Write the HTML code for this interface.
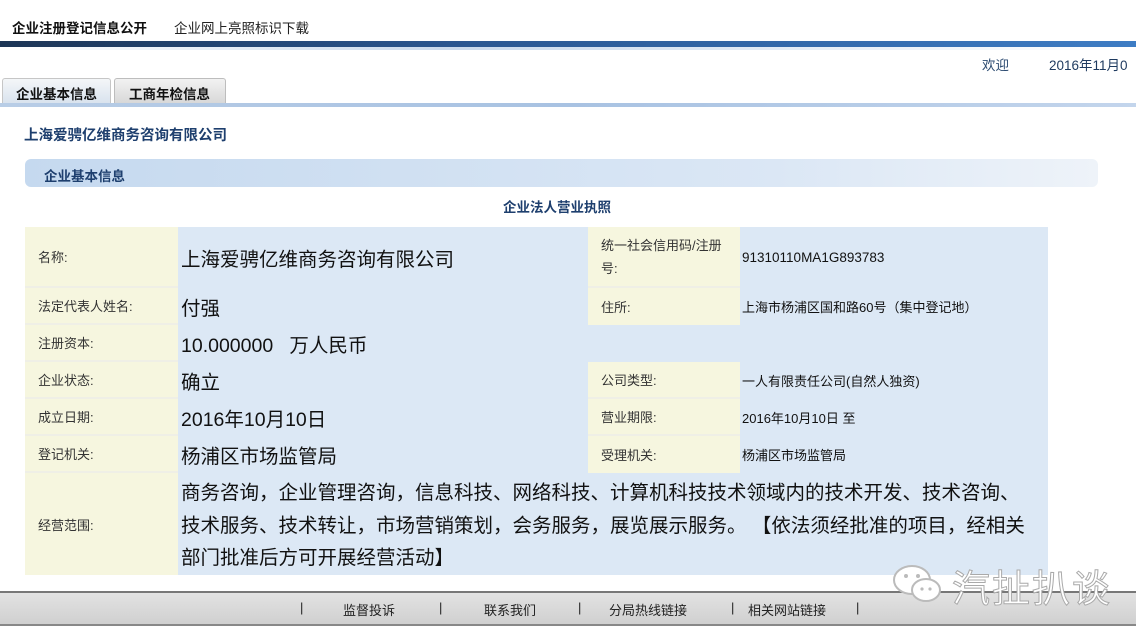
<!DOCTYPE html>
<html><head><meta charset="utf-8"><style>
*{margin:0;padding:0;box-sizing:border-box}
body{width:1136px;height:640px;position:relative;background:#fff;font-family:"Liberation Sans","Noto Sans CJK SC",sans-serif;overflow:hidden;color:#222}
.a{position:absolute;white-space:nowrap}
.lab{position:absolute;background:#f6f6df;font-size:13px;color:#333;padding-left:13px;display:flex;align-items:center;border-bottom:2px solid #efefe6}
.val{position:absolute;font-size:19.5px;color:#111;display:flex;align-items:center}
.rv{position:absolute;font-size:13px;color:#111;display:flex;align-items:center}
.f{position:absolute;top:600px;font-size:13px;color:#222}
</style></head><body>
<div class="a" style="left:12px;top:17px;font-size:13.5px;font-weight:bold;color:#111">企业注册登记信息公开</div>
<div class="a" style="left:174px;top:17px;font-size:13.5px;color:#222">企业网上亮照标识下载</div>
<div class="a" style="left:0;top:41px;width:1136px;height:6px;background:linear-gradient(90deg,#1c3556,#2a5690 40%,#3d7cc4)"></div>
<div class="a" style="left:0;top:47px;width:1136px;height:3px;background:linear-gradient(90deg,#fff,#c9d9ec 40%,#fff)"></div>
<div class="a" style="left:982px;top:54px;font-size:13.5px;color:#2b4a70">欢迎</div>
<div class="a" style="left:1049px;top:54px;font-size:13.5px;color:#1e3a5f">2016年11月0</div>
<div class="a" style="left:2px;top:78px;width:109px;height:25px;border:1px solid #c6c6c6;border-bottom:none;border-radius:3px 3px 0 0;background:linear-gradient(#f4f6f8,#d9e3ee);font-size:13.5px;font-weight:bold;padding:4px 0 0 13px;color:#111">企业基本信息</div>
<div class="a" style="left:114px;top:78px;width:112px;height:25px;border:1px solid #bdbdbd;border-bottom:none;border-radius:3px 3px 0 0;background:linear-gradient(#f2f2f2,#d8d8d8);font-size:13.5px;font-weight:bold;padding:4px 0 0 14px;color:#111">工商年检信息</div>
<div class="a" style="left:0;top:103px;width:1136px;height:4px;background:linear-gradient(90deg,#b8cde6,#a8c2e2 50%,#c3d5ec)"></div>
<div class="a" style="left:24px;top:124px;font-size:14.5px;font-weight:bold;color:#1e3f6e">上海爱骋亿维商务咨询有限公司</div>
<div class="a" style="left:25px;top:159px;width:1073px;height:28px;border-radius:6px;background:linear-gradient(90deg,#c5d9ef,#dbe7f5 70%,#eef3f9);font-size:13.5px;font-weight:bold;color:#1e3f6e;padding:6px 0 0 19px">企业基本信息</div>
<div class="a" style="left:503px;top:196px;font-size:13.5px;font-weight:bold;color:#1e3f6e">企业法人营业执照</div>

<div class="a" style="left:178px;top:227px;width:870px;height:348px;background:#dce8f5"></div>
<div class="lab" style="left:25px;top:227px;width:153px;height:61px">名称:</div>
<div class="lab" style="left:25px;top:288px;width:153px;height:37px">法定代表人姓名:</div>
<div class="lab" style="left:25px;top:325px;width:153px;height:37px">注册资本:</div>
<div class="lab" style="left:25px;top:362px;width:153px;height:37px">企业状态:</div>
<div class="lab" style="left:25px;top:399px;width:153px;height:37px">成立日期:</div>
<div class="lab" style="left:25px;top:436px;width:153px;height:37px">登记机关:</div>
<div class="lab" style="left:25px;top:473px;width:153px;height:102px;border:none">经营范围:</div>

<div class="val" style="left:181px;top:227px;height:61px">上海爱骋亿维商务咨询有限公司</div>
<div class="val" style="left:181px;top:288px;height:37px">付强</div>
<div class="val" style="left:181px;top:325px;height:37px">10.000000&nbsp;&nbsp;&nbsp;万人民币</div>
<div class="val" style="left:181px;top:362px;height:37px">确立</div>
<div class="val" style="left:181px;top:399px;height:37px">2016年10月10日</div>
<div class="val" style="left:181px;top:436px;height:37px">杨浦区市场监管局</div>
<div class="a" style="left:181px;top:477px;font-size:19.5px;line-height:32.5px;color:#111">商务咨询，企业管理咨询，信息科技、网络科技、计算机科技技术领域内的技术开发、技术咨询、<br>技术服务、技术转让，市场营销策划，会务服务，展览展示服务。 【依法须经批准的项目，经相关<br>部门批准后方可开展经营活动】</div>

<div class="lab" style="left:588px;top:227px;width:152px;height:61px;line-height:23px;white-space:normal;padding-right:4px">统一社会信用码/注册号:</div>
<div class="lab" style="left:588px;top:288px;width:152px;height:37px;border:none">住所:</div>
<div class="lab" style="left:588px;top:362px;width:152px;height:37px">公司类型:</div>
<div class="lab" style="left:588px;top:399px;width:152px;height:37px">营业期限:</div>
<div class="lab" style="left:588px;top:436px;width:152px;height:37px;border:none">受理机关:</div>
<div class="rv" style="left:742px;top:227px;height:61px;font-size:13.5px">91310110MA1G893783</div>
<div class="rv" style="left:742px;top:288px;height:37px">上海市杨浦区国和路60号（集中登记地）</div>
<div class="rv" style="left:742px;top:362px;height:37px">一人有限责任公司(自然人独资)</div>
<div class="rv" style="left:742px;top:399px;height:37px">2016年10月10日 至</div>
<div class="rv" style="left:742px;top:436px;height:37px">杨浦区市场监管局</div>

<div class="a" style="left:0;top:591px;width:1136px;height:35px;background:linear-gradient(#e2e2e2,#d0d0d0);border-top:2px solid #777;border-bottom:2px solid #888"></div>
<div class="f" style="left:300px">|</div>
<div class="f" style="left:343px">监督投诉</div>
<div class="f" style="left:439px">|</div>
<div class="f" style="left:484px">联系我们</div>
<div class="f" style="left:578px">|</div>
<div class="f" style="left:609px">分局热线链接</div>
<div class="f" style="left:731px">|</div>
<div class="f" style="left:748px">相关网站链接</div>
<div class="f" style="left:856px">|</div>
<svg class="a" style="left:890px;top:560px" width="60" height="50" viewBox="0 0 60 50"><ellipse cx="22" cy="20" rx="18" ry="14" fill="#fff" stroke="#bbb" stroke-width="2"/><ellipse cx="36" cy="30" rx="14" ry="11" fill="#fff" stroke="#bbb" stroke-width="2"/><circle cx="16" cy="16" r="2" fill="#bbb"/><circle cx="28" cy="16" r="2" fill="#bbb"/><circle cx="32" cy="29" r="1.6" fill="#bbb"/><circle cx="40" cy="29" r="1.6" fill="#bbb"/></svg>
<div class="a" style="left:952px;top:558px;font-size:38px;color:#fff;-webkit-text-stroke:1px #aaa;letter-spacing:2px">汽扯扒谈</div>
</body></html>
